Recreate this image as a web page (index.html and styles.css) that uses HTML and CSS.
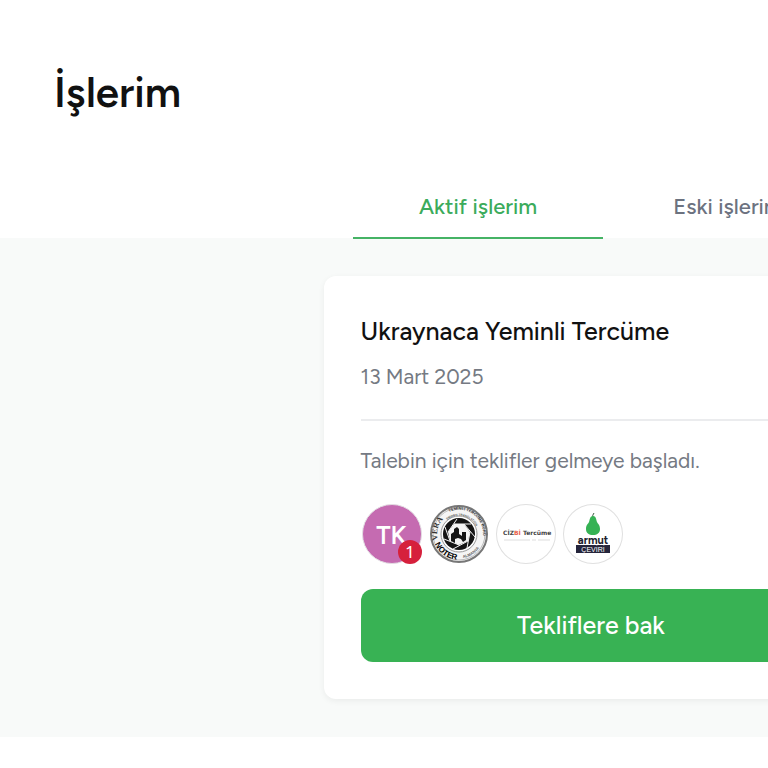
FILE: index.html
```html
<!DOCTYPE html>
<html lang="tr">
<head>
    <meta charset="UTF-8">
    <meta name="viewport" content="width=device-width, initial-scale=1.0">
    <title>İşlerim</title>
    <link rel="stylesheet" href="styles.css">
</head>
<body>
    <div class="page">
        <header class="header">
            <h1>İşlerim</h1>
            <nav class="tabs">
                <a href="#aktif" class="tab active">Aktif işlerim</a>
                <a href="#eski" class="tab">Eski işlerim</a>
            </nav>
        </header>
        <main class="content" id="aktif">
            <article class="card">
                <h2>Ukraynaca Yeminli Tercüme</h2>
                <p class="date">13 Mart 2025</p>
                <hr>
                <p class="status">Talebin için teklifler gelmeye başladı.</p>
                <ul class="offers">
                    <li class="avatar initials">
                        TK
                        <span class="badge">1</span>
                    </li>
                    <li class="avatar">
                        <svg viewBox="0 0 60 60">
                            <defs>
                                <path id="arcName" d="M9 36 A22 22 0 0 1 19 11"/>
                                <path id="arcNoter" d="M6 40 A26 26 0 0 0 36 55"/>
                                <path id="arcTop" d="M20 8 A24 24 0 0 1 53 37"/>
                                <path id="arcInner" d="M18 16 A19 19 0 0 1 49 30"/>
                                <path id="arcBottom" d="M34 54 A24 24 0 0 0 53 39"/>
                            </defs>
                            <circle cx="30" cy="30" r="28" fill="#f5f5f5" stroke="#777" stroke-width="2"/>
                            <circle cx="30" cy="30" r="26" fill="none" stroke="#bbb" stroke-width="1"/>
                            <circle cx="30" cy="30" r="18" fill="#fff" stroke="#999" stroke-width="1"/>
                            <g class="logo-text">
                                <text font-size="8" fill="#333" class="seal-name"><textPath href="#arcName">VERA</textPath></text>
                                <text font-size="8"><textPath href="#arcNoter">NOTER</textPath></text>
                                <text font-size="4" fill="#333"><textPath href="#arcTop">YEMİNLİ TERCÜME BÜRO</textPath></text>
                                <text font-size="3" fill="#555"><textPath href="#arcInner">SWORN TRANSLATION</textPath></text>
                                <text font-size="4" fill="#666"><textPath href="#arcBottom">ALMANYA</textPath></text>
                            </g>
                            <circle cx="30" cy="30" r="16" fill="#151515"/>
                            <path d="M25 20 L35 20 L41 28 L39 37 L30 41 L21 37 L19 28 Z" fill="#f5f5f5"/>
                            <g stroke="#f5f5f5" stroke-width="1">
                                <path d="M25 20 L42 20"/>
                                <path d="M35 20 L46 33"/>
                                <path d="M41 28 L38 44"/>
                                <path d="M39 37 L24 45"/>
                                <path d="M30 41 L15 35"/>
                                <path d="M21 37 L16 23"/>
                                <path d="M19 28 L28 15"/>
                            </g>
                            <path d="M22 37 L22 30 L25 28 L25 25 L28 23 L30 25 L30 30 L33 32 L33 28 L37 28 L37 36 L34 38 L32 35 L29 34 L26 35 L26 39 Z" fill="#151515"/>
                        </svg>
                    </li>
                    <li class="avatar bordered">
                        <svg viewBox="0 0 60 60">
                            <text x="7" y="31" font-size="6" class="wide-text">CİZ<tspan fill="#ea6248">Bİ</tspan> Tercüme</text>
                            <path d="M8 36 H34 M36 36 H40 M42 36 H54" stroke="#ddd" stroke-width="1"/>
                        </svg>
                    </li>
                    <li class="avatar bordered">
                        <svg viewBox="0 0 60 60">
                            <path d="M30 14 Q29 11 31 9" fill="none" stroke="#3a5a40" stroke-width="1"/>
                            <path d="M30 12 C27 12 27 15 26 18 C25 20 23 21 23 25 C23 29 26 31 30 31 C34 31 37 29 37 25 C37 21 35 20 34 18 C33 15 33 12 30 12 Z" fill="#35b254"/>
                            <text x="30" y="40" font-size="11" text-anchor="middle" class="pear-text">armut</text>
                            <rect x="13" y="41" width="34" height="8" fill="#25253b"/>
                            <text x="30" y="48" font-size="7" text-anchor="middle" fill="#fff" class="brand-text">ÇEVİRİ</text>
                        </svg>
                    </li>
                </ul>
                <button type="button">Tekliflere bak</button>
            </article>
        </main>
    </div>
</body>
</html>
```

FILE: styles.css
```css
* {
    box-sizing: border-box;
}
body {
    font-family: Figtree, Lato, 'Open Sans', sans-serif;
    background: #fff;
    color: #111;
    margin: 0;
    overflow-x: hidden;
}
.page {
    min-width: 1182px;
}
h1, h2, p, ul {
    margin: 0;
}
h1 {
    padding: 65px 54px 0;
    font-size: 42px;
    line-height: 56px;
    font-weight: 600;
}
.tabs {
    display: flex;
    justify-content: center;
    padding: 56px 0 0 24px;
}
.tab {
    width: 250px;
    padding: 16px 0;
    border-bottom: 2px solid transparent;
    color: #6c727f;
    font-size: 22px;
    line-height: 28px;
    font-weight: 500;
    text-align: center;
    text-decoration: none;
}
.tab.active {
    border-color: #45b365;
    color: #3bab5b;
}
.content {
    margin-top: -1px;
    padding: 38px 0;
    background: #f8faf9;
}
.card {
    max-width: 535px;
    margin: 0 auto;
    padding: 37px;
    background: #fff;
    border-radius: 12px;
    box-shadow: 0 2px 6px rgba(0, 0, 0, 0.06);
}
h2 {
    font-size: 25px;
    line-height: 36px;
    font-weight: 500;
}
.date, .status {
    color: #757a83;
    font-size: 21px;
    line-height: 32px;
    font-weight: 400;
}
.date {
    margin-top: 12px;
}
hr {
    margin: 26px 0 24px;
    border: none;
    border-top: 2px solid #ebecee;
}
.offers {
    display: flex;
    gap: 7px;
    margin: 27px 0 25px;
    padding: 0 1px;
    list-style: none;
}
.avatar {
    position: relative;
    width: 60px;
    height: 60px;
    border-radius: 50%;
}
.avatar svg {
    display: block;
    width: 100%;
    height: 100%;
}
.initials {
    background: #c56bb1;
    border: 1px solid #e3dde3;
    color: #fff;
    font-size: 25px;
    line-height: 60px;
    font-weight: 600;
    text-align: center;
}
.bordered {
    background: #fff;
    box-shadow: inset 0 0 0 1px #e0e0e0;
}
.badge {
    position: absolute;
    right: -1px;
    bottom: -1px;
    width: 24px;
    height: 24px;
    border-radius: 50%;
    background: #d6203c;
    font-size: 18px;
    line-height: 24px;
    font-weight: 400;
}
.logo-text {
    font-family: 'Liberation Sans', sans-serif;
    font-weight: 700;
}
.seal-name {
    font-family: 'Liberation Serif', serif;
}
.wide-text {
    font-family: 'DejaVu Sans', sans-serif;
    font-weight: 700;
    fill: #444;
}
.pear-text {
    font-family: Figtree, Lato, sans-serif;
    font-weight: 700;
    fill: #20202c;
}
.brand-text {
    font-family: 'Liberation Sans', sans-serif;
    font-weight: 400;
}
button {
    width: 100%;
    padding: 20px;
    border: none;
    border-radius: 12px;
    background: #38b254;
    color: #fff;
    font-family: inherit;
    font-size: 25px;
    line-height: 33px;
    font-weight: 500;
    cursor: pointer;
}
```
